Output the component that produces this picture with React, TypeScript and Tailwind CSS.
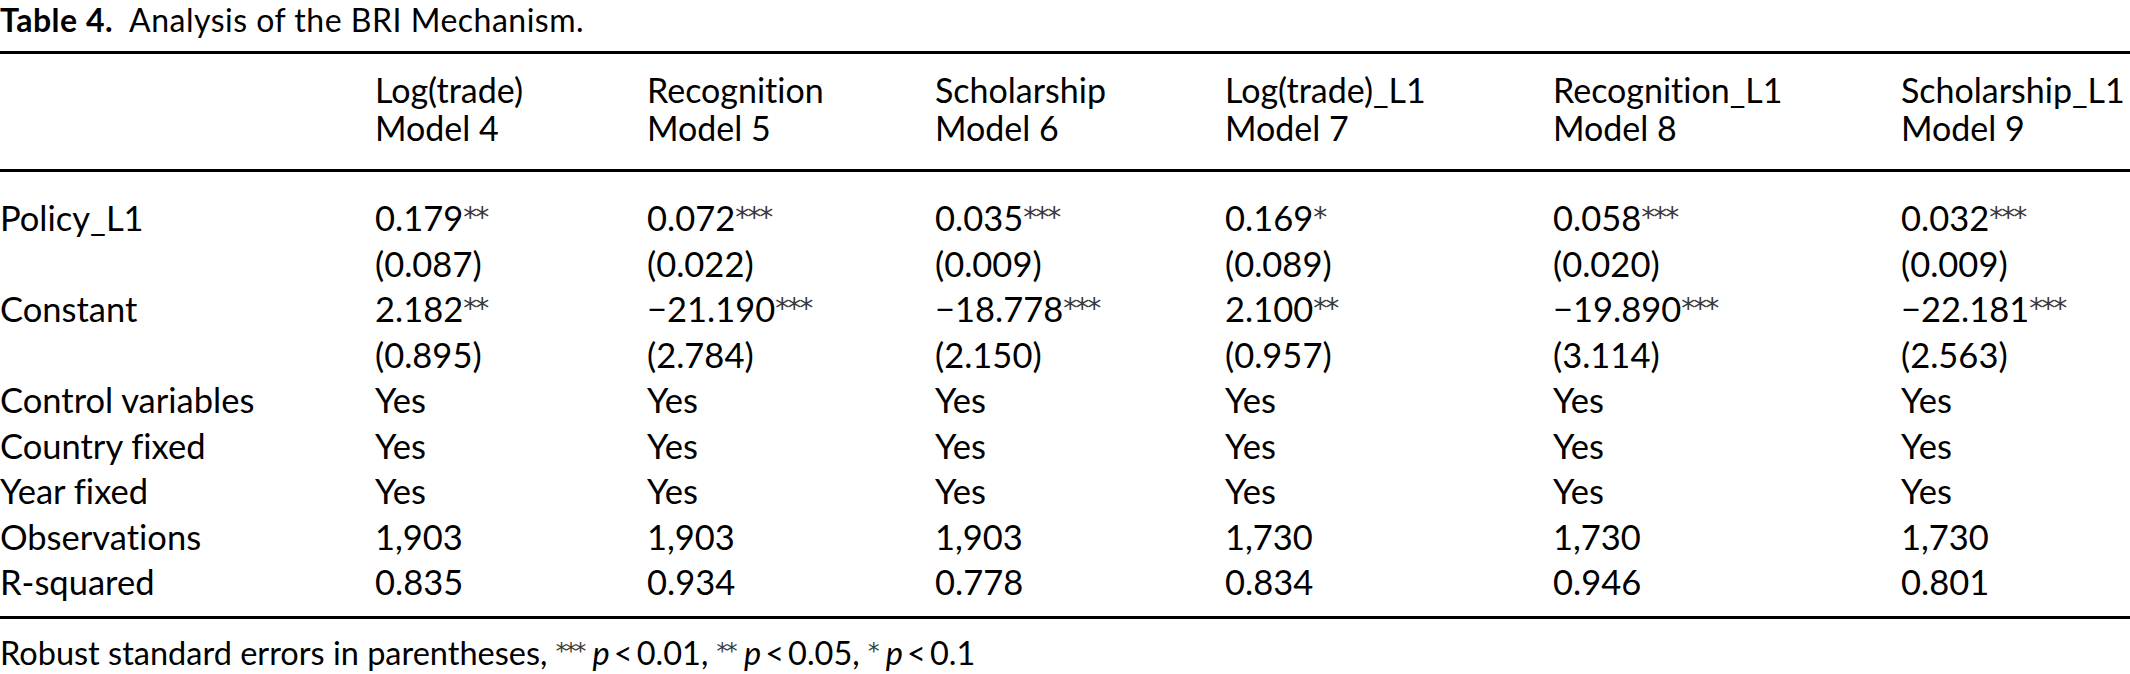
import React from "react";

type Cell = { v: string; stars?: string };

const columns = [
  ["Log(trade)", "Model 4"],
  ["Recognition", "Model 5"],
  ["Scholarship", "Model 6"],
  ["Log(trade)_L1", "Model 7"],
  ["Recognition_L1", "Model 8"],
  ["Scholarship_L1", "Model 9"],
];

const rows: { label: string; cells: Cell[] }[] = [
  {
    label: "Policy_L1",
    cells: [
      { v: "0.179", stars: "**" },
      { v: "0.072", stars: "***" },
      { v: "0.035", stars: "***" },
      { v: "0.169", stars: "*" },
      { v: "0.058", stars: "***" },
      { v: "0.032", stars: "***" },
    ],
  },
  {
    label: "",
    cells: [
      { v: "(0.087)" },
      { v: "(0.022)" },
      { v: "(0.009)" },
      { v: "(0.089)" },
      { v: "(0.020)" },
      { v: "(0.009)" },
    ],
  },
  {
    label: "Constant",
    cells: [
      { v: "2.182", stars: "**" },
      { v: "\u221221.190", stars: "***" },
      { v: "\u221218.778", stars: "***" },
      { v: "2.100", stars: "**" },
      { v: "\u221219.890", stars: "***" },
      { v: "\u221222.181", stars: "***" },
    ],
  },
  {
    label: "",
    cells: [
      { v: "(0.895)" },
      { v: "(2.784)" },
      { v: "(2.150)" },
      { v: "(0.957)" },
      { v: "(3.114)" },
      { v: "(2.563)" },
    ],
  },
  { label: "Control variables", cells: Array(6).fill({ v: "Yes" }) },
  { label: "Country fixed", cells: Array(6).fill({ v: "Yes" }) },
  { label: "Year fixed", cells: Array(6).fill({ v: "Yes" }) },
  {
    label: "Observations",
    cells: [
      { v: "1,903" },
      { v: "1,903" },
      { v: "1,903" },
      { v: "1,730" },
      { v: "1,730" },
      { v: "1,730" },
    ],
  },
  {
    label: "R-squared",
    cells: [
      { v: "0.835" },
      { v: "0.934" },
      { v: "0.778" },
      { v: "0.834" },
      { v: "0.946" },
      { v: "0.801" },
    ],
  },
];

// column starts measured off the reference: 375, 647, 935, 1225, 1553, 1901
const grid = "grid grid-cols-[375px_272px_288px_290px_328px_348px_1fr]";

const Stars = ({ s }: { s: string }) => (
  <span className="font-['DejaVu_Sans',sans-serif] text-[28px] text-[#3a3a3a] relative top-[-4px] tracking-[-2px]">
    {s}
  </span>
);

const Sup = ({ s }: { s: string }) => (
  <span className="font-['DejaVu_Sans',sans-serif] text-[23px] text-[#3a3a3a] relative top-[-6px] tracking-[-2px]">
    {s}
  </span>
);

export default function App() {
  return (
    <div className="w-[2130px] h-[674px] bg-white text-black font-['Lato',sans-serif] [font-variant-ligatures:none] overflow-hidden">
      {/* caption */}
      <div className="h-[51px] text-[32px] leading-[39px] tracking-[0.5px]">
        <span className="font-bold">Table 4.</span>
        <span className="ml-[16px]">Analysis of the BRI Mechanism.</span>
      </div>

      <div className="border-t-[3px] border-black" />

      {/* header */}
      <div className={`${grid} pt-[17px] pb-[22px] text-[34px] leading-[38px]`}>
        <div />
        {columns.map((c) => (
          <div key={c[1]} className="flex flex-col whitespace-nowrap">
            <span>{c[0]}</span>
            <span>{c[1]}</span>
          </div>
        ))}
        <div />
      </div>

      <div className="border-t-[3px] border-black" />

      {/* body */}
      <div className="pt-[20px] pb-[14px] text-[34.5px]">
        {rows.map((r, i) => (
          <div key={i} className={`${grid} h-[45.5px] items-center whitespace-nowrap`}>
            <div>{r.label}</div>
            {r.cells.map((c, j) => (
              <div key={j}>
                {c.v}
                {c.stars && <Stars s={c.stars} />}
              </div>
            ))}
            <div />
          </div>
        ))}
      </div>

      <div className="border-t-[3px] border-black" />

      {/* footnote */}
      <div className="pt-[16px] text-[32.5px] leading-[36px] whitespace-nowrap">
        Robust standard errors in parentheses, <Sup s="***" />{" "}
        <i>p</i>&thinsp;&lt;&thinsp;0.01, <Sup s="**" /> <i>p</i>&thinsp;&lt;&thinsp;0.05,{" "}
        <Sup s="*" /> <i>p</i>&thinsp;&lt;&thinsp;0.1
      </div>
    </div>
  );
}
